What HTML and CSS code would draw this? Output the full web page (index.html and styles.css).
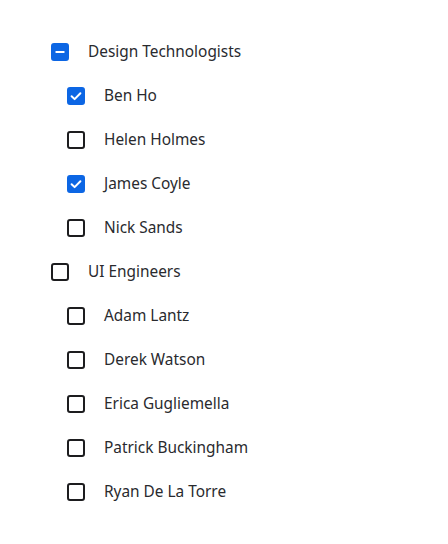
FILE: index.html
```html
<!DOCTYPE html>
<html>
<head>
<meta charset="utf-8">
<link rel="stylesheet" href="styles.css">
</head>
<body>
<ul class="tree">
  <li class="row parent">
    <span class="box checked"><svg viewBox="0 0 18 18" width="18" height="18"><rect x="4.5" y="8" width="9" height="2" rx="0.5" fill="#fff"/></svg></span>
    <span class="label">Design Technologists</span>
  </li>
  <li class="row child">
    <span class="box checked"><svg viewBox="0 0 18 18" width="18" height="18"><path d="M4.6 9.2 L7.6 12.1 L13.4 6.2" fill="none" stroke="#fff" stroke-width="2" stroke-linecap="round" stroke-linejoin="round"/></svg></span>
    <span class="label">Ben Ho</span>
  </li>
  <li class="row child">
    <span class="box"></span>
    <span class="label">Helen Holmes</span>
  </li>
  <li class="row child">
    <span class="box checked"><svg viewBox="0 0 18 18" width="18" height="18"><path d="M4.6 9.2 L7.6 12.1 L13.4 6.2" fill="none" stroke="#fff" stroke-width="2" stroke-linecap="round" stroke-linejoin="round"/></svg></span>
    <span class="label">James Coyle</span>
  </li>
  <li class="row child">
    <span class="box"></span>
    <span class="label">Nick Sands</span>
  </li>
  <li class="row parent">
    <span class="box"></span>
    <span class="label">UI Engineers</span>
  </li>
  <li class="row child">
    <span class="box"></span>
    <span class="label">Adam Lantz</span>
  </li>
  <li class="row child">
    <span class="box"></span>
    <span class="label">Derek Watson</span>
  </li>
  <li class="row child">
    <span class="box"></span>
    <span class="label">Erica Gugliemella</span>
  </li>
  <li class="row child">
    <span class="box"></span>
    <span class="label">Patrick Buckingham</span>
  </li>
  <li class="row child">
    <span class="box"></span>
    <span class="label">Ryan De La Torre</span>
  </li>
</ul>
</body>
</html>
```
FILE: styles.css
```css
html, body {
  margin: 0;
  padding: 0;
  background: #ffffff;
}
body {
  font-family: "Noto Sans", "Lato", sans-serif;
  font-size: 15.4px;
  color: #292a2e;
}
.tree {
  list-style: none;
  margin: 0;
  padding: 30px 0 0 51px;
}
.row {
  display: flex;
  align-items: center;
  height: 44px;
}
.child {
  padding-left: 16px;
}
.box {
  box-sizing: border-box;
  width: 18px;
  height: 18px;
  border: 2px solid #1d1d1f;
  border-radius: 3px;
  flex: none;
  position: relative;
}
.box.checked {
  background: #0c66e4;
  border-color: #0c66e4;
}
.box svg {
  position: absolute;
  left: -2px;
  top: -2px;
  display: block;
}
.label {
  margin-left: 19px;
  line-height: 20px;
}
```
